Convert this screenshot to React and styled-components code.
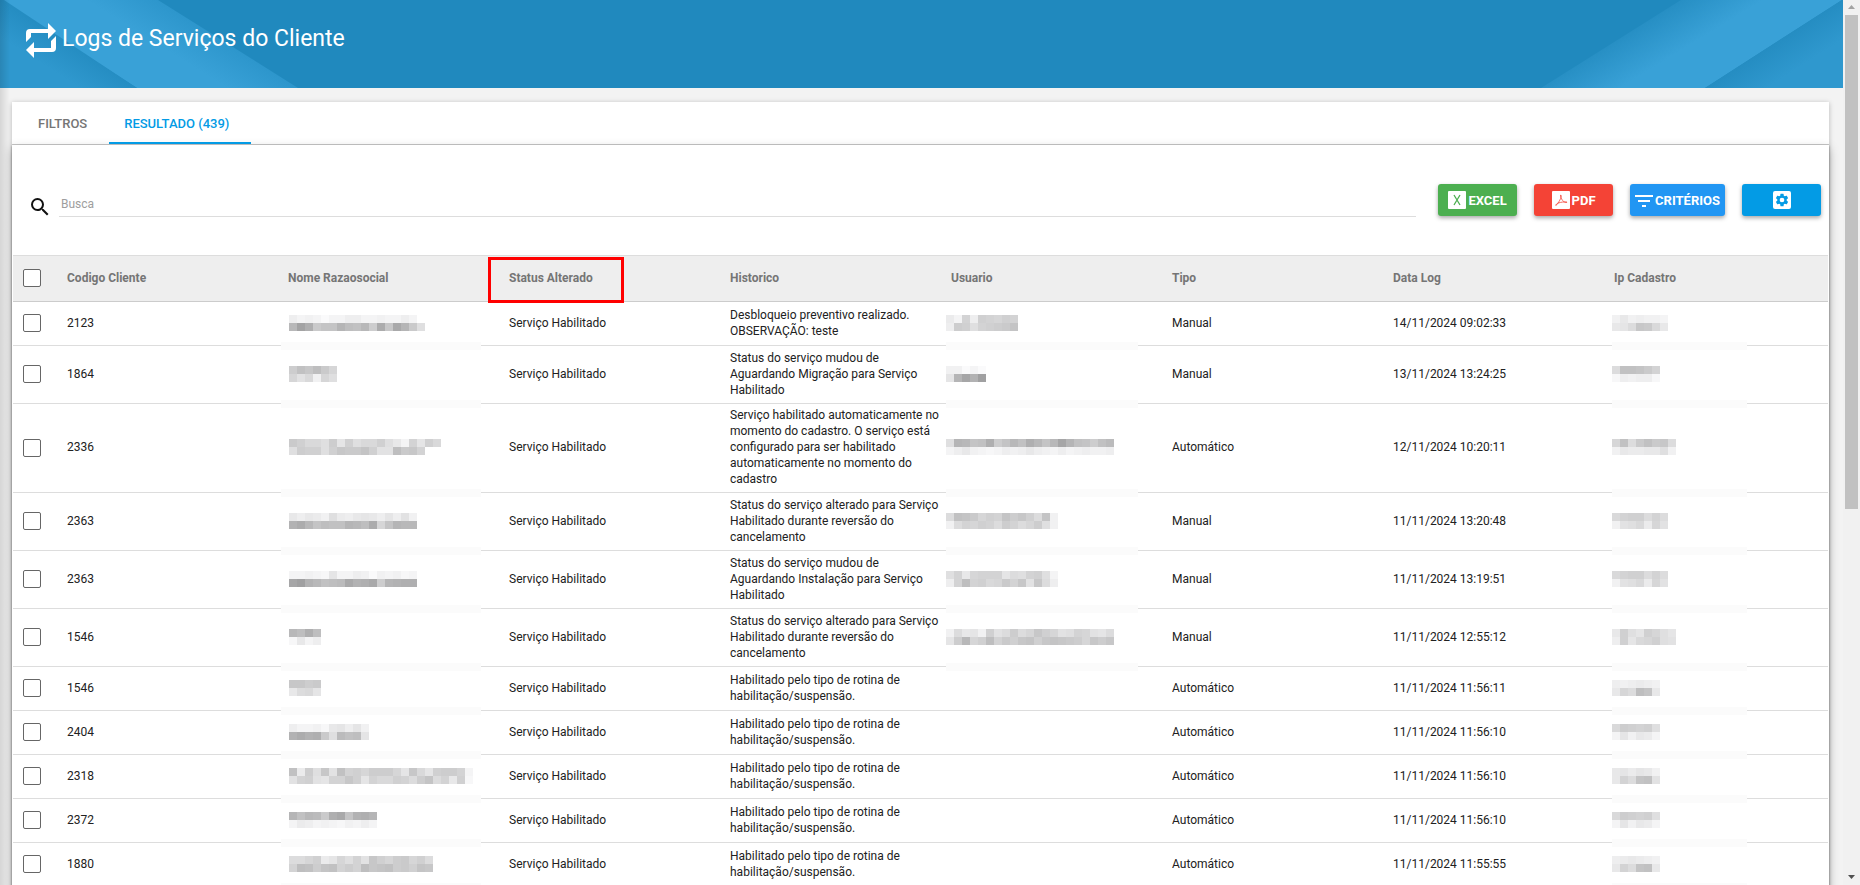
import React from 'react';
import styled, { createGlobalStyle, css } from 'styled-components';

const TM = {
  primary: '#039be5',
  headerColor: '#2089be',
  pageBg: '#f3f3f3',
  textColor: '#212121',
  mutedColor: '#757575',
  lineColor: '#dddddd',
};

const GlobalStyle = createGlobalStyle`
  *, *::before, *::after { box-sizing: border-box; }
  html, body, #root { height: 100%; }
  body {
    margin: 0;
    overflow: hidden;
    color: ${TM.textColor};
    background: ${TM.pageBg};
    font-family: Roboto, "Liberation Sans", sans-serif;
    font-size: 12px;
  }
`;

///////////////////////////////////////////////////////////////////////////////////////////////////
// Page frame

const Frame = styled.div`
  display: flex;
  height: 100vh;
  overflow: hidden;
`;

const Page = styled.div`
  position: relative;
  flex: 1;
  min-width: 0;
  overflow: hidden;

  /* shade cast by the closed side menu */
  &::after {
    content: "";
    position: absolute;
    top: 0;
    bottom: 0;
    left: 0;
    width: 10px;
    background: linear-gradient(to right, rgba(0, 0, 0, 0.12), rgba(0, 0, 0, 0));
  }
`;

const ScrollTrack = styled.div`
  width: 17px;
  display: flex;
  flex-direction: column;
  align-items: center;
  justify-content: space-between;
  background: #f1f1f1;
`;

const ScrollThumb = styled.div`
  width: 13px;
  height: 494px;
  margin-bottom: auto;
  background: #c1c1c1;
`;

const ScrollArrow = styled.svg`
  display: block;
  width: 17px;
  height: 15px;
  fill: ${({ $active }) => $active ? '#505050' : '#a3a3a3'};
`;

const ScrollBar = () => (
  <ScrollTrack aria-hidden="true">
    <ScrollArrow viewBox="0 0 17 15"><path d="M5 9L8.500 5L12 9z" /></ScrollArrow>
    <ScrollThumb />
    <ScrollArrow $active viewBox="0 0 17 15"><path d="M5 5L8.500 9L12 5z" /></ScrollArrow>
  </ScrollTrack>
);

///////////////////////////////////////////////////////////////////////////////////////////////////
// Title bar

const TitleBar = styled.header`
  position: relative;
  display: flex;
  align-items: center;
  height: 88px;
  padding: 0 24px 6px;
  background: ${TM.headerColor};
`;

const Ribbon = styled.svg`
  position: absolute;
  top: 0;
  width: 304px;
  height: 88px;
  ${({ $right }) => $right ? css`right: 0;` : css`left: 0;`}
`;

const TitleIcon = styled.svg`
  position: relative;
  width: 34px;
  height: 36px;
  fill: #fff;
`;

const Title = styled.h1`
  position: relative;
  margin: 0 0 4px 4px;
  color: #fff;
  font-size: 23px;
  font-weight: 400;
  line-height: 32px;
`;

const LeftRibbon = () => (
  <Ribbon viewBox="0 0 304 88" aria-hidden="true">
    <defs>
      <linearGradient id="lBand" gradientUnits="userSpaceOnUse" x1="215" y1="36" x2="195" y2="68">
        <stop offset="0" stopColor="#2d96cc" />
        <stop offset="1" stopColor="#39a1d7" />
      </linearGradient>
      <linearGradient id="lCorner" gradientUnits="userSpaceOnUse" x1="75" y1="47" x2="58" y2="74">
        <stop offset="0" stopColor="#258dc2" />
        <stop offset="1" stopColor="#2f98ce" />
      </linearGradient>
    </defs>
    <path d="M4 0H158L298 88H137L0 0z" fill="url(#lBand)" />
    <path d="M0 0L4 0L137 88H0z" fill="url(#lCorner)" />
  </Ribbon>
);

const RightRibbon = () => (
  <Ribbon $right viewBox="0 0 304 88" aria-hidden="true">
    <defs>
      <linearGradient id="rBand" gradientUnits="userSpaceOnUse" x1="75" y1="42" x2="97" y2="78">
        <stop offset="0" stopColor="#278fc4" />
        <stop offset="1" stopColor="#39a1d7" />
      </linearGradient>
      <linearGradient id="rCorner" gradientUnits="userSpaceOnUse" x1="235" y1="44" x2="253" y2="72">
        <stop offset="0" stopColor="#258dc2" />
        <stop offset="1" stopColor="#2f98ce" />
      </linearGradient>
    </defs>
    <path d="M142 0H303L166 88H2z" fill="url(#rBand)" />
    <path d="M303 0H304V88H166z" fill="url(#rCorner)" />
  </Ribbon>
);

///////////////////////////////////////////////////////////////////////////////////////////////////
// Tabs

const Card = styled.main`
  margin: 14px 14px 0 12px;
  background: #fff;
  box-shadow: 0 1px 5px rgba(0, 0, 0, 0.25);
`;

const Tabs = styled.nav`
  display: flex;
  height: 43px;
  padding-left: 11px;
  border-bottom: 1px solid #cccccc;
`;

const Tab = styled.button`
  padding: 2px 22px 0 15px;
  border: 0;
  border-bottom: 2px solid ${({ $active }) => $active ? TM.primary : 'transparent'};
  background: none;
  color: ${({ $active }) => $active ? TM.primary : TM.mutedColor};
  font-family: inherit;
  font-size: 13px;
  font-weight: 500;
`;

///////////////////////////////////////////////////////////////////////////////////////////////////
// Toolbar

const Panel = styled.section`
  min-height: 760px;
  padding: 0 1px;
  background: #fff;
  box-shadow: 0 1px 2px rgba(0, 0, 0, 0.45), 0 4px 10px rgba(0, 0, 0, 0.25);
`;

const Toolbar = styled.div`
  display: flex;
  align-items: flex-start;
  height: 110px;
  padding: 39px 7px 0 14px;
`;

const SearchLabel = styled.label`
  display: flex;
  flex: 1;
  align-items: flex-end;
  height: 33px;
  margin-right: 22px;
`;

const SearchIcon = styled.svg`
  width: 24px;
  height: 24px;
  margin: 0 7px -2px 1px;
  fill: #111;
`;

const SearchInput = styled.input`
  flex: 1;
  height: 28px;
  padding: 3px 2px 0;
  border: 0;
  border-bottom: 1px solid ${TM.lineColor};
  outline: 0;
  background: none;
  font-family: inherit;
  font-size: 12px;

  &::placeholder { color: #9e9e9e; opacity: 1; }
`;

const Actions = styled.div`
  display: flex;
  gap: 17px;
`;

const ActionButton = styled.button`
  display: flex;
  align-items: center;
  justify-content: center;
  gap: 2px;
  min-width: 79px;
  height: 32px;
  padding: 0 5px;
  border: 0;
  border-radius: 3px;
  background: ${({ $color }) => $color};
  box-shadow: 0 2px 4px rgba(0, 0, 0, 0.35);
  color: #fff;
  font-family: inherit;
  font-size: 13px;
  font-weight: 700;
`;

const ButtonIcon = styled.svg`
  width: 18px;
  height: 18px;
  fill: #fff;
`;

///////////////////////////////////////////////////////////////////////////////////////////////////
// Table

const Table = styled.table`
  width: 100%;
  border-spacing: 0;
  table-layout: fixed;
  line-height: 16px;
`;

const CheckCol = styled.col`
  width: 47px;
`;

const HeadCell = styled.th`
  position: relative;
  height: 47px;
  padding: 0 2px 2px 7px;
  border-top: 1px solid ${TM.lineColor};
  border-bottom: 1px solid #cccccc;
  background: #eeeeee;
  color: ${TM.mutedColor};
  font-weight: 700;
  text-align: left;
`;

const Highlight = styled.span`
  position: absolute;
  top: 1px;
  left: -14px;
  width: 136px;
  height: 46px;
  border: 3px solid #ff0000;
  z-index: 1;
`;

const Cell = styled.td`
  position: relative;
  height: ${({ $tall }) => $tall ? 58 : 44}px;
  padding: 3px 2px 5px 7px;
  border-bottom: 1px solid ${TM.lineColor};
`;

const Check = styled.input`
  appearance: none;
  display: block;
  width: 18px;
  height: 18px;
  margin: 1px 0 0 3px;
  border: 1px solid #666;
  border-radius: 2px;
  background: #fff;

  &:checked { background: ${TM.primary}; }
`;

// Pixelated private data. The strip hides the row line under it.
const Strip = styled.span`
  position: absolute;
  left: ${({ $left }) => $left}px;
  bottom: -5px;
  width: ${({ $width }) => $width}px;
  height: 8px;
  background: #fbfbfb;
  z-index: 1;
`;

const Pixels = styled.svg`
  display: block;
  margin-left: ${({ $shift }) => $shift}px;
`;

const shade = (c) => {
  const v = 145 + parseInt(c, 36) * 3;
  return `rgb(${v},${v},${v + 1})`;
};

const Mosaic = ({ rows, shift }) => {
  const cols = Math.max(...rows.map((r) => r.length));

  return (
    <Pixels $shift={shift} width={cols * 8} height={rows.length * 8} shapeRendering="crispEdges">
      {rows.map((row, y) => row.split('').map((c, x) => (
        <rect key={`${x}-${y}`} x={x * 8} y={y * 8} width="8" height="8" fill={shade(c)} />
      )))}
    </Pixels>
  );
};

const Masked = ({ value, tall, shift, left, width }) => (
  <Cell $tall={tall}>
    { value && <Mosaic rows={value.split('|')} shift={shift} /> }
    { width > 0 && <Strip $left={left} $width={width} /> }
  </Cell>
);

///////////////////////////////////////////////////////////////////////////////////////////////////
// Data

const COLUMNS = ['Codigo Cliente', 'Nome Razaosocial', 'Status Alterado', 'Historico', 'Usuario', 'Tipo', 'Data Log', 'Ip Cadastro'];

const ROUTINE = 'Habilitado pelo tipo de rotina de habilitação/suspensão.';
const REVERSAL = 'Status do serviço alterado para Serviço Habilitado durante reversão do cancelamento';

const ROWS = [
  { id: '2123', name: 'VXWXZXXVVXXWXXVX|D6AJHHCFGDK9I8CJQ', text: 'Desbloqueio preventivo realizado. OBSERVAÇÃO: teste', user: 'UXMVLMNLM|VKLQMLKJH', type: 'Manual', date: '14/11/2024 09:02:33', ip: 'WTWVWWX|TSPIJOT' },
  { id: '1864', name: 'KGIFJN|NROWNQ', tall: true, text: 'Status do serviço mudou de Aguardando Migração para Serviço Habilitado', user: 'WWZXZ|SC7B5', type: 'Manual', date: '13/11/2024 13:24:25', ip: 'PGGHJM|YVWVVY' },
  { id: '2336', name: 'JLOOQKSLQOOLQTXMSLO|QKLLQLIJJHLRRFJIM', tall: true, text: 'Serviço habilitado automaticamente no momento do cadastro. O serviço está configurado para ser habilitado automaticamente no momento do cadastro', user: 'QCDHGAKHDGADHD7CGHKGE|XVTWXYXVWVTVWXVXWVWWV', type: 'Automático', date: '12/11/2024 10:20:11', ip: 'NGPJGJIP|WTUUTTQW' },
  { id: '2363', name: 'TVTUWQUVTSTVSVRW|B9DHFGGCDF9NHCDD', tall: true, text: REVERSAL, user: 'PGHJNLMHKILPHW|WPMNLMPKMPNKQW', type: 'Manual', date: '11/11/2024 13:20:48', ip: 'OMLLPMP|WRQOUNR' },
  { id: '2363', name: 'XXWXYSXXVWZWXWYX|75BDGFE8BA8KCBAA', tall: true, text: 'Status do serviço mudou de Aguardando Instalação para Serviço Habilitado', user: 'QMTNMMMSPQMLQX|VMFMLONJMIRIPV', type: 'Manual', date: '11/11/2024 13:19:51', ip: 'OMLLPMP|WRQOUNR' },
  { id: '1546', name: 'DFAF|YTXV', tall: true, text: REVERSAL, user: 'WPTSWLRPKPNILNRQMNRSP|SKDNLFMJLIHLIHIJKNIKI', type: 'Manual', date: '11/11/2024 12:55:12', ip: 'TLQSLNQS|VLSONLQR' },
  { id: '1546', name: 'IIKJ|TPOS', text: ROUTINE, type: 'Automático', date: '11/11/2024 11:56:11', ip: 'VWVUVW|TNPFHT' },
  { id: '2404', name: 'VXXWYTSVSW|B9BAJQEGFS', text: ROUTINE, type: 'Automático', date: '11/11/2024 11:56:10', ip: 'OKLMLQ|XSWTUX' },
  { id: '2318', name: 'GUKQIRGMLNKKKNSIOSLKKMX|RMLRSMMILSMOOLMPKHPMTLY', text: ROUTINE, type: 'Automático', date: '11/11/2024 11:56:10', ip: 'TSUSTW|TMPHGR' },
  { id: '2372', name: 'CGDEJA8HBAC|XUVXWXYWXVX', text: ROUTINE, type: 'Automático', date: '11/11/2024 11:56:10', ip: 'OKLMLQ|XSWTUX' },
  { id: '1880', name: 'PPNLUSNQMRILNKJNLP|MFGKHGMKMFIHGKJLHI', text: ROUTINE, type: 'Automático', date: '11/11/2024 11:55:55', ip: 'VUTUVW|TMPHGT' },
];

const LogRow = ({ row }) => {
  const { id, name, tall, text, user, type, date, ip } = row;

  return (
    <tr>
      <Cell $tall={tall}><Check type="checkbox" aria-label={`Selecionar ${id}`} /></Cell>
      <Cell $tall={tall}>{ id }</Cell>
      <Masked tall={tall} value={name} shift={1} left={0} width={200} />
      <Cell $tall={tall}>Serviço Habilitado</Cell>
      <Cell $tall={tall}>{ text }</Cell>
      <Masked tall={tall} value={user} shift={-5} left={2} width={user ? 192 : 0} />
      <Cell $tall={tall}>{ type }</Cell>
      <Cell $tall={tall}>{ date }</Cell>
      <Masked tall={tall} value={ip} shift={-2} left={5} width={135} />
    </tr>
  );
}

const App = () => (
  <>
    <GlobalStyle />
    <Frame>
      <Page>
        <TitleBar>
          <LeftRibbon />
          <RightRibbon />
          <TitleIcon viewBox="0 0 34 36" aria-hidden="true">
            <path d="M2 19V10Q2 6 6 6H24V0L32 8L24 16V10H7V14z" />
            <path d="M32 13V25Q32 29 28 29H10V35L2 27L10 19V25H27V18z" />
          </TitleIcon>
          <Title>Logs de Serviços do Cliente</Title>
        </TitleBar>
        <Card>
          <Tabs>
            <Tab type="button">FILTROS</Tab>
            <Tab type="button" $active>RESULTADO (439)</Tab>
          </Tabs>
          <Panel>
            <Toolbar>
              <SearchLabel>
                <SearchIcon viewBox="0 0 24 24" aria-hidden="true">
                  <path d="M15.500 14h-.79l-.28-.27A6.470 6.470 0 0 0 16 9.500 6.500 6.500 0 1 0 9.500 16c1.610 0 3.090-.59 4.230-1.570l.27.28v.79l5 4.990L20.490 19l-4.990-5zm-6 0C7.010 14 5 11.990 5 9.500S7.010 5 9.500 5 14 7.010 14 9.500 11.990 14 9.500 14z" />
                </SearchIcon>
                <SearchInput type="text" placeholder="Busca" aria-label="Busca" />
              </SearchLabel>
              <Actions>
                <ActionButton type="button" $color="#4caf50">
                  <ButtonIcon viewBox="0 0 18 18">
                    <rect width="18" height="18" rx="1" />
                    <path d="M6 4L12 14M12 4L6 14" stroke="#4caf50" strokeWidth="1.300" />
                  </ButtonIcon>
                  EXCEL
                </ActionButton>
                <ActionButton type="button" $color="#f44336">
                  <ButtonIcon viewBox="0 0 18 18">
                    <rect width="18" height="18" rx="1" />
                    <path d="M8.500 4C10 4 9 9 4 14.500C3 13 8 10.500 15 11C15 12.500 9 11 8.500 4z" fill="none" stroke="#f44336" strokeWidth=".8" />
                  </ButtonIcon>
                  PDF
                </ActionButton>
                <ActionButton type="button" $color="#2196f3">
                  <ButtonIcon viewBox="0 0 18 18">
                    <path d="M0 4H18V6H0zM3 9H15V11H3zM7 14H11V16H7z" />
                  </ButtonIcon>
                  CRITÉRIOS
                </ActionButton>
                <ActionButton type="button" $color={TM.primary} aria-label="Configurações">
                  <ButtonIcon viewBox="3 3 18 18">
                    <rect x="3" y="3" width="18" height="18" rx="2" />
                    <g transform="translate(4.200 4.200) scale(.65)" fill={TM.primary}>
                      <path d="M19.140 12.940c.04-.3.06-.61.06-.94s-.02-.64-.07-.94l2.030-1.580a.49.49 0 0 0 .12-.61l-1.920-3.320a.49.49 0 0 0-.59-.22l-2.390.96a7 7 0 0 0-1.620-.94l-.36-2.540a.48.48 0 0 0-.48-.41h-3.840a.47.47 0 0 0-.47.41l-.36 2.540c-.59.24-1.130.57-1.620.94l-2.390-.96a.48.48 0 0 0-.59.22L2.740 8.870a.47.47 0 0 0 .12.61l2.030 1.580a6 6 0 0 0 0 1.880l-2.030 1.580a.49.49 0 0 0-.12.61l1.920 3.320c.12.22.37.29.59.22l2.390-.96c.5.38 1.030.7 1.620.94l.36 2.540c.05.24.24.41.48.41h3.840c.24 0 .44-.17.47-.41l.36-2.540a7 7 0 0 0 1.620-.94l2.390.96c.22.08.47 0 .59-.22l1.920-3.320a.47.47 0 0 0-.12-.61zM12 15.600A3.600 3.600 0 1 1 12 8.400a3.600 3.600 0 0 1 0 7.200z" />
                    </g>
                  </ButtonIcon>
                </ActionButton>
              </Actions>
            </Toolbar>
            <Table>
              <colgroup>
                <CheckCol />
                {COLUMNS.map((name) => <col key={name} />)}
              </colgroup>
              <thead>
                <tr>
                  <HeadCell><Check type="checkbox" aria-label="Selecionar todos" /></HeadCell>
                  {COLUMNS.map((name) => (
                    <HeadCell key={name}>
                      { name }
                      { name === 'Status Alterado' && <Highlight /> }
                    </HeadCell>
                  ))}
                </tr>
              </thead>
              <tbody>
                {ROWS.map((row) => <LogRow key={row.date + row.id + row.name} row={row} />)}
              </tbody>
            </Table>
          </Panel>
        </Card>
      </Page>
      <ScrollBar />
    </Frame>
  </>
);

export default App;
